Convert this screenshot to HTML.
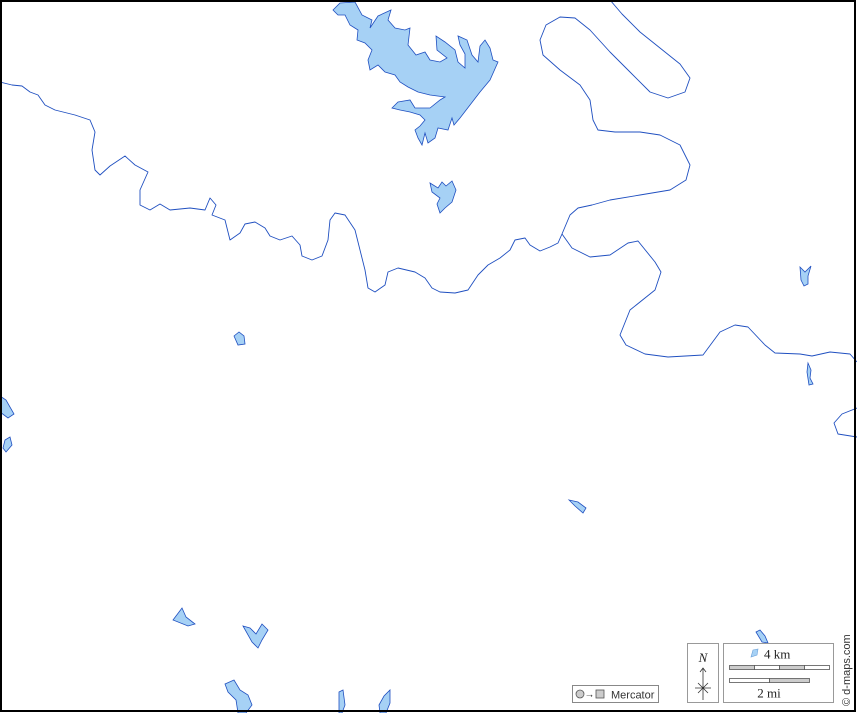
<!DOCTYPE html>
<html><head><meta charset="utf-8"><style>
html,body{margin:0;padding:0;background:#fff;}
svg{display:block;}
</style></head><body>
<svg width="857" height="713" viewBox="0 0 857 713" xmlns="http://www.w3.org/2000/svg">
<rect x="0" y="0" width="857" height="713" fill="#fff"/>
<g fill="none" stroke="#1f4fc0" stroke-width="0.9" stroke-linejoin="round">
<path d="M0,82 L12,85 L22,86 L30,92 L38,95 L45,105 L55,110 L75,115 L90,120 L95,132 L92,150 L95,170 L100,175 L110,166 L125,156 L135,165 L148,172 L140,190 L140,205 L150,210 L160,204 L170,210 L190,208 L205,210 L210,198 L216,205 L212,215 L225,220 L230,240 L240,233 L245,224 L255,222 L265,228 L270,236 L280,240 L292,236 L300,245 L302,256 L312,260 L322,256 L328,240 L330,220 L335,213 L345,215 L355,230 L360,250 L365,270 L368,288 L375,292 L385,285 L388,272 L398,268 L415,272 L425,278 L432,288 L440,292 L455,293 L468,290 L478,275 L488,265 L500,258 L510,250 L515,240 L525,238 L530,245 L540,251 L550,247 L558,243 L562,234 L570,215 L578,208 L592,205 L610,200 L640,195 L670,190 L686,180 L690,165 L680,145 L660,135 L640,132 L615,132 L598,130 L593,120 L590,100 L580,85 L560,70 L543,55 L540,40 L546,25 L560,17 L575,18 L590,30 L610,52 L630,72 L650,92 L668,98 L685,92 L690,78 L680,64 L660,48 L640,32 L622,14 L610,0"/>
<path d="M562,234 L572,248 L590,257 L610,255 L628,243 L638,241 L655,262 L661,272 L655,290 L630,310 L620,335 L626,345 L645,354 L668,357 L703,355 L720,332 L735,325 L748,327 L765,345 L775,353 L800,354 L812,356 L830,352 L850,354 L857,362"/>
<path d="M857,408 L842,414 L834,423 L838,434 L857,437"/>
</g>
<g fill="#a6d1f5" stroke="#1f4fc0" stroke-width="0.8">
<path d="M333,10 L340,3 L355,2 L362,15 L372,20 L370,28 L378,16 L391,10 L388,20 L395,28 L405,30 L410,28 L408,45 L416,55 L425,52 L430,60 L440,62 L447,58 L437,50 L436,36 L445,42 L455,50 L458,62 L465,68 L465,54 L460,45 L458,36 L467,40 L472,55 L478,62 L480,46 L485,40 L490,48 L493,60 L498,62 L490,80 L480,92 L470,105 L460,118 L454,125 L452,118 L448,130 L438,128 L435,138 L428,143 L425,133 L422,145 L418,138 L415,130 L420,126 L425,120 L420,115 L410,112 L400,110 L392,108 L398,102 L410,100 L415,108 L430,108 L440,100 L445,97 L430,95 L418,92 L408,87 L400,82 L395,75 L385,72 L378,65 L370,70 L368,60 L372,50 L365,43 L357,40 L358,30 L350,25 L345,15 L338,15 Z"/>
<path d="M430,183 L438,188 L442,182 L446,186 L452,181 L456,190 L452,202 L445,208 L440,213 L437,204 L440,198 L432,192 Z"/>
<path d="M234,336 L239,332 L244,336 L245,344 L238,345 Z"/>
<path d="M0,396 L6,400 L14,414 L8,418 L0,412 Z"/>
<path d="M5,440 L10,437 L12,445 L6,452 L3,448 Z"/>
<path d="M569,500 L578,502 L586,508 L583,513 L575,506 Z"/>
<path d="M173,620 L182,608 L186,617 L195,624 L188,626 Z"/>
<path d="M243,626 L250,628 L256,634 L262,624 L268,630 L262,640 L258,648 L252,642 Z"/>
<path d="M225,684 L234,680 L240,690 L248,695 L252,705 L246,713 L238,713 L236,700 L228,692 Z"/>
<path d="M339,692 L343,690 L345,705 L342,713 L339,713 Z"/>
<path d="M379,705 L384,696 L390,690 L390,703 L386,713 L380,713 Z"/>
<path d="M800,267 L805,272 L811,266 L808,276 L808,284 L804,286 L801,280 Z"/>
<path d="M808,363 L811,370 L810,378 L813,384 L809,385 L807,372 Z"/>
<path d="M756,632 L760,630 L765,636 L768,643 L762,642 Z"/>
</g>
<rect x="1" y="1" width="854" height="710" fill="none" stroke="#000" stroke-width="2"/>
<rect x="572.5" y="685.5" width="86" height="17" fill="#fff" stroke="#888"/>
<circle cx="580" cy="694" r="4" fill="#ccc" stroke="#555" stroke-width="0.8"/>
<text x="584.5" y="697.5" font-family="Liberation Sans, sans-serif" font-size="10" fill="#333">→</text>
<rect x="596" y="690" width="8" height="8" fill="#ccc" stroke="#555" stroke-width="0.8"/>
<text x="611" y="698.5" font-family="Liberation Sans, sans-serif" font-size="11" fill="#333">Mercator</text>
<rect x="687.5" y="643.5" width="31" height="59" fill="#fff" stroke="#999"/>
<text x="703" y="662" text-anchor="middle" font-family="Liberation Serif, serif" font-style="italic" font-size="13" fill="#222">N</text>
<g stroke="#333" stroke-width="0.8" fill="none">
<path d="M703,668 L703,700 M700,672 L703,668 L706,672 M695,688 L711,688 M698,683 L708,693 M708,683 L698,693"/>
</g>
<rect x="723.5" y="643.5" width="110" height="59" fill="#fff" stroke="#999"/>
<path d="M753,650 L758,649 L757,655 L751,657 Z" fill="#a6d1f5" stroke="#6aa0d8" stroke-width="0.6"/>
<text x="764" y="658.5" font-family="Liberation Serif, serif" font-size="13" fill="#222">4 km</text>
<g stroke="#555" stroke-width="0.8">
<rect x="729.5" y="665.5" width="25" height="4" fill="#ccc"/>
<rect x="754.5" y="665.5" width="25" height="4" fill="#fff"/>
<rect x="779.5" y="665.5" width="25" height="4" fill="#ccc"/>
<rect x="804.5" y="665.5" width="25" height="4" fill="#fff"/>
<rect x="729.5" y="678.5" width="40" height="4" fill="#fff"/>
<rect x="769.5" y="678.5" width="40" height="4" fill="#ccc"/>
</g>
<text x="769" y="697.5" text-anchor="middle" font-family="Liberation Serif, serif" font-size="13" fill="#222">2 mi</text>
<text transform="translate(850,706) rotate(-90)" font-family="Liberation Sans, sans-serif" font-size="11" fill="#333">© d-maps.com</text>
</svg>
</body></html>
